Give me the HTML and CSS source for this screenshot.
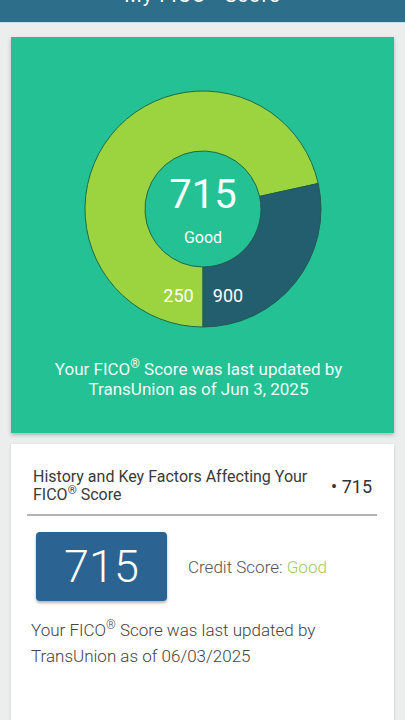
FILE: index.html
```html
<!DOCTYPE html>
<html lang="en">
<head>
  <meta charset="UTF-8" />
  <meta name="viewport" content="width=device-width, initial-scale=1.0"/>
  <title>My FICO Score</title>
  <link rel="stylesheet" href="styles.css">
</head>
<body>
  <header class="topbar">
    <h1 class="topbar-title">My FICO<sup>®</sup> Score</h1>
  </header>

  <main class="page">
    <section class="score-card">
      <svg class="gauge" width="240" height="240" viewBox="0 0 240 240">
        <!-- 250 at the bottom, clockwise up to 715 -->
        <path class="gauge-fill" d="M120 238 A118 118 0 1 1 235.2 94.5 L176.6 107.4 A58 58 0 1 0 120 178 Z"/>
        <path class="gauge-rest" d="M235.2 94.5 A118 118 0 0 1 120 238 L120 178 A58 58 0 0 0 176.6 107.4 Z"/>
        <text class="gauge-score" x="120" y="119">715</text>
        <text class="gauge-label" x="120" y="154">Good</text>
        <text class="gauge-min" x="95.5" y="213">250</text>
        <text class="gauge-max" x="145" y="213">900</text>
      </svg>
      <p class="score-note">Your FICO<sup>®</sup> Score was last updated by<br>TransUnion as of Jun 3, 2025</p>
    </section>

    <section class="history-card">
      <div class="history-head">
        <h2 class="history-title">History and Key Factors Affecting Your FICO<sup>®</sup> Score</h2>
        <span class="history-score">• 715</span>
      </div>
      <div class="score-row">
        <div class="score-box">715</div>
        <div class="score-rating">Credit Score: <span class="good">Good</span></div>
      </div>
      <p class="history-note">Your FICO<sup>®</sup> Score was last updated by<br>TransUnion as of 06/03/2025</p>
    </section>
  </main>
</body>
</html>
```

FILE: styles.css
```css
body {
  margin: 0;
  background: #eceeed;
  font-family: Roboto, "Liberation Sans", sans-serif;
  color: #444;
}
sup {
  font-size: 0.72em;
  line-height: 0;
}
.topbar {
  height: 22px;
  overflow: hidden;
  background: #2d6e8a;
  border-bottom: 1px solid #c9e0e8;
}
.topbar-title {
  margin: -17px 0 0;
  font-size: 20px;
  font-weight: 400;
  color: #fff;
  text-align: center;
  letter-spacing: 1px;
}
.page {
  padding: 14px 11px 0;
}
.score-card {
  background: #23c194;
  padding: 52px 0 34px;
  box-shadow: 0 2px 4px rgba(0, 0, 0, 0.25);
}
.gauge {
  display: block;
  margin: 0 auto;
}
.gauge-fill {
  fill: #9bd43f;
  stroke: #1f6b45;
  stroke-width: 1;
}
.gauge-rest {
  fill: #235e6f;
  stroke: #1f5a52;
  stroke-width: 1;
}
.gauge text {
  fill: #fff;
  text-anchor: middle;
  font-family: Roboto, "Liberation Sans", sans-serif;
}
.gauge-score {
  font-size: 40px;
}
.gauge-label {
  font-size: 16px;
}
.gauge-min,
.gauge-max {
  font-size: 18px;
}
.score-note {
  margin: 30px 0 0;
  padding-right: 8px;
  font-size: 17px;
  line-height: 20px;
  text-align: center;
  color: #f1fbf7;
}
.history-card {
  margin-top: 11px;
  background: #fff;
  padding: 0 17px 60px 16px;
  box-shadow: 0 1px 3px rgba(0, 0, 0, 0.15);
}
.history-head {
  display: flex;
  align-items: center;
  gap: 12px;
  padding: 24px 5px 10px 6px;
  border-bottom: 2px solid #b4b4b4;
}
.history-title {
  flex: 1;
  margin: 0;
  font-size: 16px;
  font-weight: 400;
  line-height: 18px;
  color: #3a3a3a;
}
.history-score {
  font-size: 18px;
  color: #333;
}
.score-row {
  display: flex;
  align-items: center;
  gap: 21px;
  margin: 16px 0 0 9px;
}
.score-box {
  width: 131px;
  height: 69px;
  border-radius: 4px;
  background: #2b6393;
  color: #fff;
  font-size: 45px;
  font-weight: 300;
  line-height: 69px;
  text-align: center;
  box-shadow: 0 2px 3px rgba(0, 0, 0, 0.3);
}
.score-rating {
  font-size: 17px;
  font-weight: 300;
  color: #555;
}
.good {
  color: #9ccc65;
}
.history-note {
  margin: 16px 0 0 4px;
  font-size: 17px;
  font-weight: 300;
  line-height: 26px;
  color: #444;
}
```
